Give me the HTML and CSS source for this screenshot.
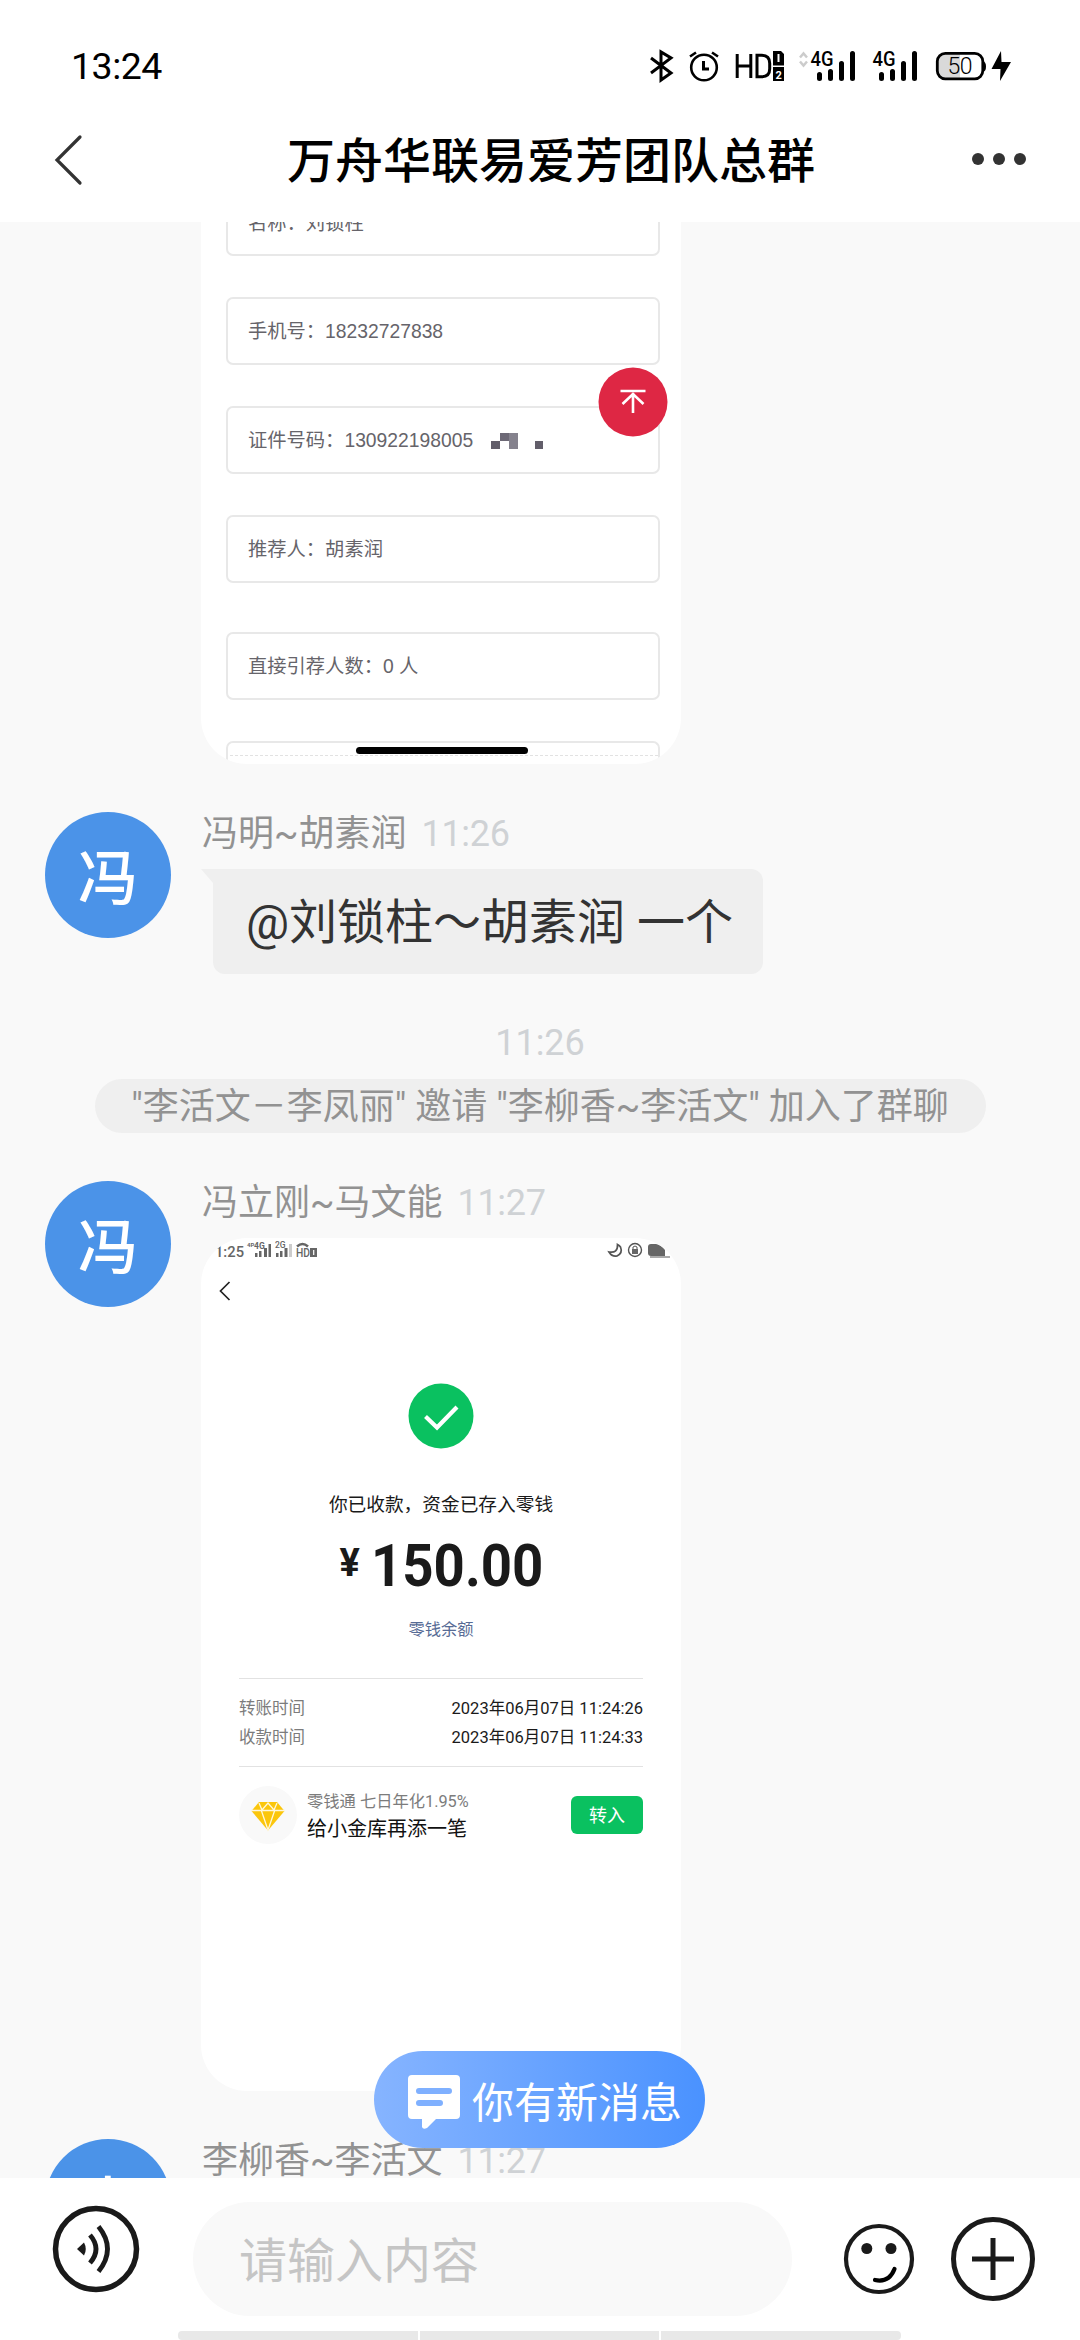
FILE: index.html
```html
<!DOCTYPE html>
<html lang="zh-CN">
<head>
<meta charset="utf-8">
<title>万舟华联易爱芳团队总群</title>
<link rel="stylesheet" href="styles.css">
</head>
<body>
<div class="status-bar">
  <time class="clock">13:24</time>
  <svg class="status-icons" width="364" height="34" viewBox="649 49 364 34">
    <path d="M651 58l20 15-10 7V52l10 6-20 15" fill="none" stroke="#000" stroke-width="3"/>
    <g fill="none" stroke="#000" stroke-width="2.6"><circle cx="704" cy="67.500" r="12.800"/><path d="M690 56.500l6-4M718 56.500l-6-4"/><path d="M703.500 61v8h5.500" stroke-width="3"/></g>
    <path d="M737.200 54v24M750.800 54v24M737.200 66h13.600M757 55.200h4.500q8.200 0 8.200 8v5.600q0 8-8.200 8H757z" fill="none" stroke="#000" stroke-width="3"/>
    <path d="M773 51h8l3 3v11.500h-11zM773 67h11v14h-11z"/>
    <path d="M778.500 54v8" stroke="#fff" stroke-width="2"/>
    <text x="775.500" y="78.500" font-size="11" font-weight="700" fill="#fff">2</text>
    <path d="M800 57.500l3.500-4 3.500 4M800 61.500l3.500 4 3.500-4" fill="none" stroke="#ccc" stroke-width="2.500"/>
    <text x="810.500" y="65.500" font-size="19.500" font-weight="500" textLength="23" lengthAdjust="spacingAndGlyphs">4G</text>
    <path d="M819.500 74.500v4M830.500 71.500v7M841.500 63.500v15M852.500 53.500v25" stroke="#000" stroke-width="5" stroke-linecap="round"/>
    <text x="872.500" y="65.500" font-size="19.500" font-weight="500" textLength="23" lengthAdjust="spacingAndGlyphs">4G</text>
    <path d="M881.500 74.500v4M892.500 71.500v7M903.500 63.500v15M914.500 53.500v25" stroke="#000" stroke-width="5" stroke-linecap="round"/>
    <path d="M944 53h16v26h-16q-6-1-6-7V60q0-6 6-7z" fill="#d9d9d9"/>
    <rect x="937.300" y="53.300" width="45.500" height="25.500" rx="8" fill="none" stroke="#000" stroke-width="2.800"/>
    <path d="M983 61q3 1 3 5.500t-3 5.500z"/>
    <text x="947.500" y="73.500" font-size="23" font-weight="300" textLength="25">50</text>
    <path d="M1001 51l-9.500 18h9l-.5 12 11-19h-9.500z"/>
  </svg>
</div>
<header class="nav">
  <svg class="back" width="32" height="52" viewBox="0 0 32 52"><path d="M28 3L5 26l23 23" fill="none" stroke="#333" stroke-width="3.200" stroke-linecap="round"/></svg>
  <h1>万舟华联易爱芳团队总群</h1>
  <div class="more"><i></i><i></i><i></i></div>
</header>

<main class="chat">
  <section class="shot form-shot">
    <div class="field first">名称：刘锁柱</div>
    <div class="field">手机号：18232727838</div>
    <div class="field">证件号码：13092219800<span class="cut">5</span>
      <svg class="mosaic" width="54" height="18" viewBox="0 0 54 18"><path fill="#625e6a" d="M1 9h9v8H1zM45 9h8v8h-8z"/><path fill="#6d6976" d="M10 1h9v8h-9z"/><path fill="#85828d" d="M19 1h9v16h-9z"/></svg>
    </div>
    <div class="field">推荐人：胡素润</div>
    <div class="field wide">直接引荐人数：0 人</div>
    <div class="field last"></div>
    <svg class="to-top" width="70" height="70" viewBox="0 0 70 70"><circle cx="35" cy="35" r="34.500" fill="#de2744"/><path d="M22.500 24h25M35 46V26M24.500 37L35 27l10.500 10" fill="none" stroke="#fff" stroke-width="2.600"/></svg>
    <div class="home-line"></div>
  </section>

  <article class="message">
    <div class="avatar">冯</div>
    <div class="content">
      <div class="name">冯明~胡素润<time>11:26</time></div>
      <div class="bubble-row">
        <svg width="12" height="14" viewBox="0 0 12 14"><path d="M0 0h12v14z" fill="#efefef"/></svg>
        <div class="bubble">@刘锁柱～胡素润 一个</div>
      </div>
    </div>
  </article>

  <div class="notice">
    <time>11:26</time>
    <p>"李活文－李凤丽" 邀请 "李柳香~李活文" 加入了群聊</p>
  </div>

  <article class="message">
    <div class="avatar">冯</div>
    <div class="content">
      <div class="name">冯立刚~马文能<time>11:27</time></div>
      <section class="shot receipt">
        <svg class="mini-status" width="480" height="70" viewBox="201 1238 480 70">
          <g fill="#666">
            <text x="215" y="1256.500" font-size="15.500" font-weight="500" textLength="29" lengthAdjust="spacingAndGlyphs">1:25</text>
            <text x="247" y="1247" font-size="6" font-weight="700">4P</text><text x="254" y="1249" font-size="8.500" font-weight="700">4G</text>
            <text x="275" y="1248" font-size="8.500" font-weight="500">2G</text>
            <path d="M255 1253h2.500v4H255zM259 1251h2.500v6H259zM264 1248h3v9h-3zM268.500 1244h2.500v13h-2.500zM276 1253h2.500v4H276zM280 1251h2.500v6H280zM284.500 1248h3v9h-3z"/>
            <path fill="#ccc" d="M289 1244h3v13h-3z"/>
            <text x="296" y="1257" font-size="12.500" font-weight="500" textLength="14" lengthAdjust="spacingAndGlyphs">HD</text>
            <path d="M310 1248h7v9h-7z"/><path d="M313.700 1250v5" stroke="#fff" stroke-width="1.200"/>
            <path d="M297 1246.500q5.500-5 11 0" fill="none" stroke="#666" stroke-width="2.500"/>
            <path d="M617.500 1244.500q.5 9-8.500 7.500 3 5 8 4 6-3 3.500-9-1-1.500-3-2.500z" fill="none" stroke="#555" stroke-width="1.700"/>
            <circle cx="635" cy="1250" r="6.500" fill="none" stroke="#555" stroke-width="1.400"/><path d="M632 1249h6v5h-6z"/><path d="M633 1249v-2q2-2 4 0v2" fill="none" stroke="#555"/>
            <path d="M648 1247q0-3 3-3h5q5 1 9 6v6h-14q-3 0-3-3z"/><path d="M650 1257h20" stroke="#555" stroke-width="1"/>
          </g>
          <path d="M229.500 1282l-9 9 9 9" fill="none" stroke="#222" stroke-width="1.700"/>
        </svg>
        <svg class="success" width="66" height="66" viewBox="0 0 66 66"><circle cx="33" cy="33" r="32.500" fill="#0ac160"/><path d="M17.500 33.500L29 44.500 49 24" fill="none" stroke="#fff" stroke-width="4.200"/></svg>
        <div class="paid">你已收款，资金已存入零钱</div>
        <div class="amount"><span class="yen">¥</span><span class="digits">150.00</span></div>
        <div class="balance">零钱余额</div>
        <dl class="times">
          <div><dt>转账时间</dt><dd>2023年06月07日 11:24:26</dd></div>
          <div><dt>收款时间</dt><dd>2023年06月07日 11:24:33</dd></div>
        </dl>
        <div class="promo">
          <svg width="58" height="58" viewBox="0 0 58 58"><circle cx="29" cy="29" r="29" fill="#f9f9f9"/><path d="M20 16h18l7.500 9L29 44.500 12.500 25z" fill="#fbc60c"/><path d="M12 24.500h34M20 17l3 7 6-7 6 7 3-7M22.500 25L29 44l6.500-19" fill="none" stroke="#fff7dc" stroke-width="1.300"/></svg>
          <div class="promo-text"><span>零钱通 七日年化1.95%</span><b>给小金库再添一笔</b></div>
          <div class="transfer">转入</div>
        </div>
      </section>
    </div>
  </article>

  <article class="message">
    <div class="avatar">李</div>
    <div class="content"><div class="name">李柳香~李活文<time>11:27</time></div></div>
  </article>

  <div class="new-message">
    <svg width="54" height="54" viewBox="0 0 54 54"><path d="M5 0h44q4 0 4 4v36q0 4-4 4H29l-9 9q-4 2-5-1v-8H5q-4 0-4-4V4q0-4 4-4z" fill="#fff"/><path d="M12 16h30M12 28h21" stroke="#7fb0ff" stroke-width="6" stroke-linecap="round"/></svg>
    <span>你有新消息</span>
  </div>
</main>

<footer class="composer">
  <svg class="voice" width="88" height="88" viewBox="0 0 88 88"><circle cx="44" cy="44" r="40.500" fill="none" stroke="#1a1a1a" stroke-width="5.500"/><path d="M25 44l7-6.500q3.500 6.500 0 13z" fill="#1a1a1a"/><path d="M38 30q12 14 0 28M46.500 21.500q18 22.500 0 45" fill="none" stroke="#1a1a1a" stroke-width="4.800"/></svg>
  <div class="input">请输入内容</div>
  <svg class="smile" width="72" height="72" viewBox="0 0 72 72"><circle cx="36" cy="36" r="33" fill="none" stroke="#1a1a1a" stroke-width="4.200"/><circle cx="23.800" cy="25.500" r="5.500" fill="#1a1a1a"/><circle cx="48" cy="25.500" r="5.500" fill="#1a1a1a"/><path d="M32 57q14 3 19.500-11" fill="none" stroke="#000" stroke-width="4.200" stroke-linecap="round"/></svg>
  <svg class="plus" width="86" height="86" viewBox="0 0 86 86"><circle cx="43" cy="43" r="39.500" fill="none" stroke="#1a1a1a" stroke-width="5"/><path d="M43 22v42M22 43h42" stroke="#1a1a1a" stroke-width="5"/></svg>
</footer>
<div class="gesture-bar"><i></i><i></i><i></i></div>
</body>
</html>
```

FILE: styles.css
```css
* { box-sizing: border-box; }
body {
  margin: 0;
  width: 1080px;
  height: 2340px;
  overflow: hidden;
  display: flex;
  flex-direction: column;
  background: #fff;
  color: #000;
  font-family: Roboto, "Noto Sans CJK SC", sans-serif;
}
svg { display: block; flex: none; overflow: visible; }
h1, p, dl, dd { margin: 0; }

.status-bar {
  height: 98px;
  padding: 34px 67px 0 71px;
  display: flex;
  justify-content: space-between;
  flex: none;
}
.clock { font-size: 37.500px; line-height: 64px; letter-spacing: -0.500px; }
.status-icons { margin-top: 15px; }

.nav {
  height: 124px;
  flex: none;
  display: flex;
  align-items: center;
  padding: 0 54px 0 52px;
}
.nav h1 { font-size: 48px; line-height: 70px; font-weight: 500; margin: 4px auto 0 203px; }
.more { display: flex; gap: 9px; margin-top: -2px; }
.more i { width: 12px; height: 12px; border-radius: 50%; background: #333; }

.chat {
  position: relative;
  height: 1956px;
  flex: none;
  overflow: hidden;
  background: #f9f9f9;
}

.shot { position: relative; width: 480px; background: #fff; overflow: hidden; }
.form-shot {
  height: 542px;
  margin-left: 201px;
  padding: 0 21px 0 25px;
  border-radius: 0 0 46px 46px;
}
.field {
  height: 68px;
  margin-bottom: 41px;
  padding: 1px 0 0 20px;
  border: 2px solid #e8e8e8;
  border-radius: 7px;
  display: flex;
  align-items: center;
  color: #66646a;
  font: 19.3px/30px "Liberation Sans", "Noto Sans CJK SC", sans-serif;
  white-space: pre;
}
.field.first { margin-top: -34px; padding-top: 3px; }
.cut { margin-right: 17px; }
.field.wide { margin-top: 49px; }
.field.last { height: 19px; margin: 0; border-bottom: 0; border-radius: 7px 7px 0 0; }
.field.last::after { content: ""; flex: 1; margin: 6px 0 0 -18px; border-top: 1px dashed #e2e2e2; }
.to-top { position: absolute; left: 397px; top: 145px; }
.home-line {
  position: absolute; left: 155px; top: 525px;
  width: 172px; height: 7px; border-radius: 4px; background: #000;
}

.message { display: flex; padding-left: 45px; margin-top: 48px; }
.avatar {
  width: 126px; height: 126px; flex: none;
  margin-right: 30px;
  border-radius: 50%;
  background: #4b93e8;
  color: #fff;
  font-size: 60px; font-weight: 500; line-height: 136px;
  text-align: center;
}
.name { height: 57px; padding-left: 1px; font-size: 36px; line-height: 44px; color: #929292; white-space: nowrap; }
time { font-weight: 400; }
.name time { margin-left: 15px; color: #cfd2d5; letter-spacing: -0.300px; }
.bubble-row { display: flex; }
.bubble {
  height: 105px;
  width: 550px;
  padding-left: 33px;
  border-radius: 0 12px 12px 12px;
  background: #efefef;
  color: #333;
  font-size: 48px; line-height: 107px;
  white-space: nowrap;
}

.notice {
  margin-top: 46px;
  display: flex; flex-direction: column; align-items: center;
  font-size: 36px;
}
.notice time { color: #cfd2d5; line-height: 46px; margin-bottom: 13px; }
.notice p {
  width: 891px; height: 54px;
  border-radius: 27px;
  background: #efefef;
  color: #929292;
  line-height: 56px; text-align: center; white-space: nowrap;
}

.receipt { height: 853px; border-radius: 46px; display: flex; flex-direction: column; align-items: center; }
.success { margin-top: 75px; }
.paid { margin-top: 41px; font-size: 18.700px; line-height: 30px; color: #1a1a1a; }
.amount { display: flex; margin-top: 16px; height: 60px; width: 203px; color: #1a1a1a; font-weight: 700; line-height: 60px; }
.yen { flex: none; width: 31px; font-size: 38px; line-height: 54px; }
.digits { font-size: 59px; transform: scaleX(0.925); transform-origin: left; }
.balance { margin-top: 20px; font-size: 16.300px; line-height: 28px; color: #576b95; }
.times {
  width: 404px; height: 89px; margin-top: 34px; padding-top: 15px;
  border-top: 1px solid #e2e2e2; border-bottom: 1px solid #e2e2e2;
  font-size: 16.500px; line-height: 29px;
}
.times div { display: flex; justify-content: space-between; }
.times dt { color: #7c7c7c; }
.times dd { color: #1a1a1a; }
.promo { width: 404px; margin-top: 19px; display: flex; align-items: center; }
.promo-text { margin-left: 10px; flex: 1; display: flex; flex-direction: column; }
.promo-text span { font-size: 16.300px; line-height: 27px; color: #7c7c7c; }
.promo-text b { font-size: 20px; line-height: 28px; font-weight: 400; color: #111; }
.transfer {
  width: 72px; height: 38px; border-radius: 6px;
  background: #0ac160; color: #fff;
  font-size: 18px; line-height: 40px; text-align: center;
}

.new-message {
  position: absolute; left: 374px; top: 1829px;
  width: 331px; height: 97px; border-radius: 49px;
  padding-left: 33px;
  display: flex; align-items: center; gap: 11px;
  background: linear-gradient(90deg, #86b4ff, #4a92ff);
  color: #fff; font-size: 42px; white-space: nowrap;
}
.new-message svg { margin-top: 5px; }

.composer {
  height: 153px; flex: none;
  display: flex; align-items: flex-start;
  padding: 24px 44px 0 52px;
}
.voice { margin-top: 3px; }
.input {
  width: 599px; height: 114px; margin-left: 53px; padding-left: 46px;
  border-radius: 57px; background: #f9f9f9;
  color: #c5c5c5; font-size: 48px; line-height: 119px;
}
.smile { margin: 21px 0 0 51px; }
.plus { margin: 14px 0 0 35px; }
.gesture-bar { display: flex; gap: 2px; margin-left: 178px; width: 723px; height: 9px; flex: none; }
.gesture-bar i { flex: 1; background: #e8e8e8; }
.gesture-bar i:first-child { border-radius: 4px 0 0 4px; }
.gesture-bar i:last-child { border-radius: 0 4px 4px 0; }
```
